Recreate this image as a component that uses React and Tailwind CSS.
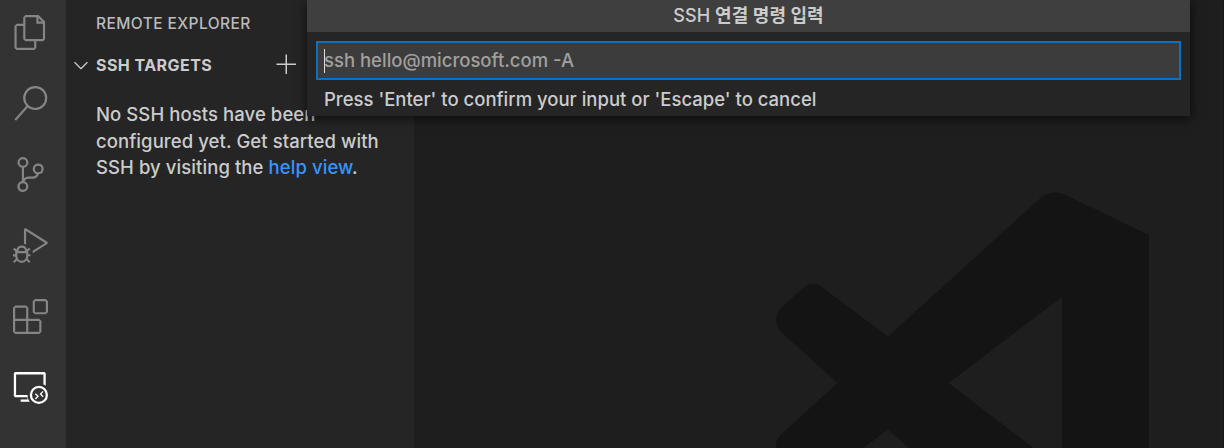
import {
  VscFiles,
  VscSearch,
  VscSourceControl,
  VscDebugAlt,
  VscExtensions,
  VscRemoteExplorer,
  VscAdd,
  VscChevronDown,
} from "react-icons/vsc";

const activities = [
  { name: "Explorer", Icon: VscFiles },
  { name: "Search", Icon: VscSearch },
  { name: "Source Control", Icon: VscSourceControl },
  { name: "Run and Debug", Icon: VscDebugAlt },
  { name: "Extensions", Icon: VscExtensions },
  { name: "Remote Explorer", Icon: VscRemoteExplorer, active: true },
];

function ActivityBar() {
  return (
    <nav className="flex w-[66px] shrink-0 flex-col bg-[#333333] pt-[0.5px] pr-[5px]">
      {activities.map(({ name, Icon, active }) => (
        <button
          key={name}
          aria-label={name}
          className={`flex h-[70.8px] w-full shrink-0 items-center justify-center ${
            active ? "text-white" : "text-[#858585]"
          }`}
        >
          <Icon className="-mt-[6px] size-[35px]" />
        </button>
      ))}
    </nav>
  );
}

function SideBar() {
  return (
    <aside className="w-[348px] shrink-0 bg-[#252526] text-[#cccccc]">
      <h2 className="flex h-[47px] items-center pl-[30px] text-[15.5px] font-medium tracking-[0.42px] text-[#bbbbbb]">
        REMOTE EXPLORER
      </h2>
      <div className="flex h-[36px] items-center pl-[4px]">
        <VscChevronDown className="mr-[4px] size-[22px]" />
        <h3 className="w-[179px] text-[16px] font-bold tracking-[0.45px]">SSH TARGETS</h3>
        <VscAdd className="size-[24px]" />
      </div>
      <p className="mt-[18px] pl-[30px] text-[18.5px] leading-[26.6px] font-medium tracking-[0.08px] whitespace-nowrap">
        <span className="block">No SSH hosts have been</span>
        <span className="block">configured yet. Get started with</span>
        <span className="block">
          SSH by visiting the <a className="text-[#3794ff]">help view</a>.
        </span>
      </p>
    </aside>
  );
}

function Watermark() {
  return (
    <svg
      viewBox="0 0 376 256"
      className="ml-[361px] mt-[192px] h-[256px] w-[376px] shrink-0"
      fill="#141414"
    >
      <path
        fillRule="evenodd"
        d="M266 5.500C273 -0.500 283 -0.700 291 3.200L374 43V256H134L113 237.200L88.500 256H1C0.500 249 3 245 7 241.500L62.500 191L6 139.800C-0.500 133 -0.500 122.500 6 115.700L29 95.300C34 90.500 40.500 90.300 46 94.300L113 144.500ZM287 105L173.500 191L258.500 256H287Z"
      />
    </svg>
  );
}

function QuickInput() {
  return (
    <section className="absolute top-0 left-[307px] flex h-[116px] w-[883px] flex-col bg-[#252526] text-[18.5px] font-medium text-[#cccccc] shadow-[0_2px_11px_rgba(0,0,0,0.7)]">
      <div className="flex h-[32px] items-center justify-center bg-[#3f3f3f] pb-[2px] text-[18px] tracking-[0.1px]">
        <span>
          SSH <span className="font-bold">연결 명령 입력</span>
        </span>
      </div>
      <div className="mx-[9px] mt-[9px] flex h-[39px] items-center border-2 border-[#0a72c4] bg-[#3c3c3c] pl-[6px] text-[#a0a0a0]">
        <span className="h-[24px] w-px bg-[#dddddd]" />
        <span className="-ml-px pt-px">ssh hello@microsoft.com -A</span>
      </div>
      <p className="pt-[6px] pl-[17px] leading-[27px]">
        Press 'Enter' to confirm your input or 'Escape' to cancel
      </p>
    </section>
  );
}

export default function App() {
  return (
    <div className="relative flex h-[448px] w-[1224px] overflow-hidden bg-[#1e1e1e] font-['Inter','Noto_Sans_CJK_KR',sans-serif]">
      <ActivityBar />
      <SideBar />
      <main className="flex flex-1 items-start overflow-hidden border-r border-dotted border-[#121212]">
        <Watermark />
      </main>
      <QuickInput />
    </div>
  );
}
